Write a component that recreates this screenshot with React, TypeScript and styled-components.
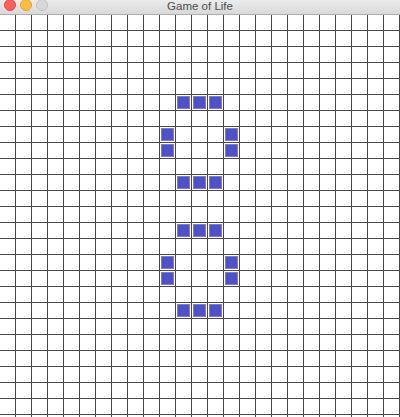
import React from "react";
import styled, { createGlobalStyle } from "styled-components";

const Global = createGlobalStyle`
  html, body { margin: 0; padding: 0; background: #ffffff; overflow: hidden; }
  body { font-family: "Liberation Sans", Arial, sans-serif; }
`;

const COLS = 25;
const ROWS = 26;

const live = new Set<string>([
  "5,11", "5,12", "5,13",
  "7,10", "8,10", "7,14", "8,14",
  "10,11", "10,12", "10,13",
  "13,11", "13,12", "13,13",
  "15,10", "16,10", "15,14", "16,14",
  "18,11", "18,12", "18,13",
]);

const Window = styled.div`
  width: 400px;
  height: 417px;
  display: flex;
  flex-direction: column;
  overflow: hidden;
  background: #fff;
`;

const TitleBar = styled.div`
  position: relative;
  height: 14px;
  flex: 0 0 14px;
  display: flex;
  align-items: flex-start;
  justify-content: center;
  background: linear-gradient(#ececec, #d8d8d8);
  border-bottom: 1px solid #b0b0b0;
`;

const Lights = styled.div`
  position: absolute;
  left: 4px;
  top: -1px;
  display: flex;
  gap: 4px;
`;

const Light = styled.span<{ $c: string; $b: string }>`
  width: 12px;
  height: 12px;
  border-radius: 50%;
  background: ${(p) => p.$c};
  border: 0.5px solid ${(p) => p.$b};
  box-sizing: border-box;
`;

const Title = styled.div`
  font-size: 11.5px;
  line-height: 13px;
  color: #4d4d4d;
`;

const Grid = styled.div`
  display: grid;
  grid-template-columns: repeat(${COLS}, 16px);
  grid-auto-rows: 16px;
`;

const Cell = styled.div`
  box-sizing: border-box;
  border-right: 1px solid #474747;
  border-bottom: 1px solid #474747;
  padding: 1px;
  display: flex;
`;

const Alive = styled.div`
  flex: 1;
  background: #5151c6;
  border: 1px solid #7b7bd4;
  box-sizing: border-box;
`;

export default function App() {
  const cells: React.ReactNode[] = [];
  for (let r = 0; r < ROWS; r++) {
    for (let c = 0; c < COLS; c++) {
      const key = `${r},${c}`;
      cells.push(<Cell key={key}>{live.has(key) && <Alive />}</Cell>);
    }
  }
  return (
    <Window>
      <Global />
      <TitleBar>
        <Lights>
          <Light $c="#fc605c" $b="#de4a46" />
          <Light $c="#fdbc40" $b="#dea236" />
          <Light $c="#d8d8d8" $b="#c2c2c2" />
        </Lights>
        <Title>Game of Life</Title>
      </TitleBar>
      <Grid>{cells}</Grid>
    </Window>
  );
}
